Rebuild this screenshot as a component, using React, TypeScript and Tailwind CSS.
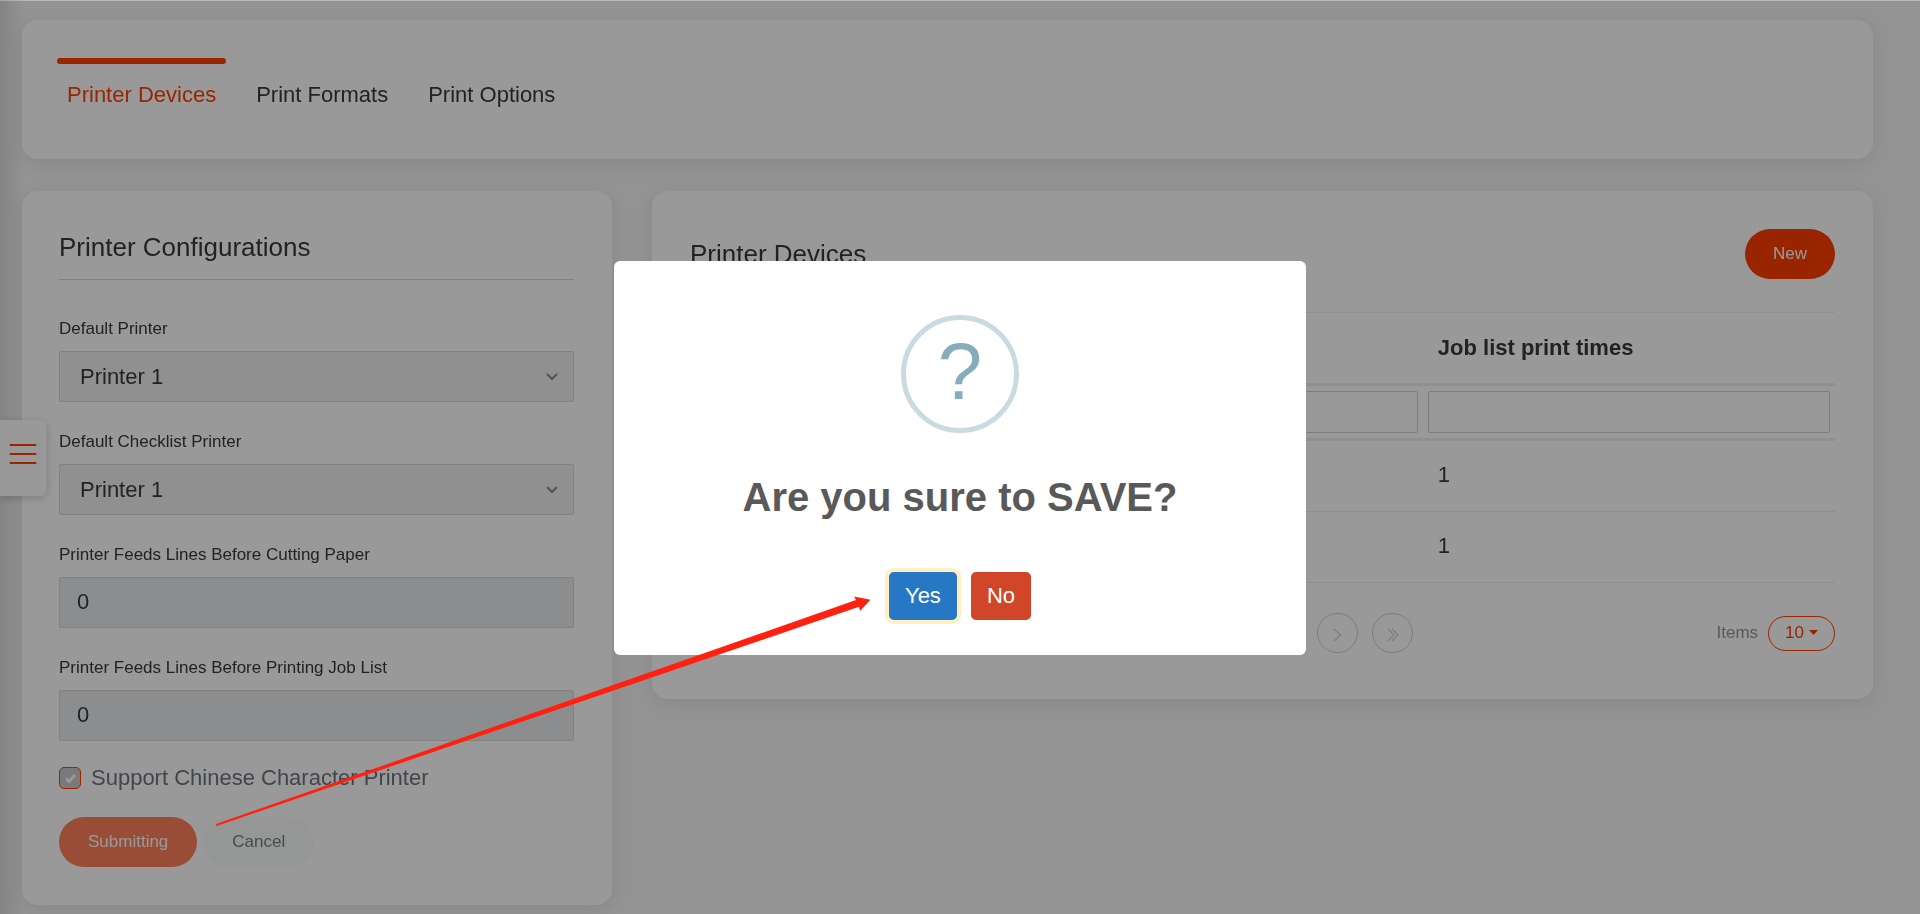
import type { ReactNode } from "react";

const tabs = ["Printer Devices", "Print Formats", "Print Options"];

const jobListTimes = [1, 1];

const Card = ({ className = "", children }: { className?: string; children: ReactNode }) => (
  <section className={`rounded-2xl bg-white shadow-[0_4px_20px_rgba(0,0,0,0.08)] ${className}`}>
    {children}
  </section>
);

const TabBar = () => (
  <Card className="h-[139px] px-[35px] pt-[38px]">
    <nav className="flex">
      {tabs.map((tab, i) => (
        <a
          key={tab}
          href="#"
          className={`relative mr-5 px-[10px] pt-[21px] text-[22px] leading-8 ${
            i === 0 ? "text-[#ff3f00]" : "text-[#393939]"
          }`}
        >
          {i === 0 && <span className="absolute inset-x-0 top-0 h-[6px] rounded-full bg-[#ff3f00]" />}
          {tab}
        </a>
      ))}
    </nav>
  </Card>
);

const PrinterSelect = ({ id, label }: { id: string; label: string }) => (
  <div>
    <label htmlFor={id} className="mb-2 block text-[17px] leading-7">
      {label}
    </label>
    <div className="relative">
      <select
        id={id}
        className="block h-[51px] w-full appearance-none rounded-xs border border-[#d7d7d7] bg-[#f0f0f0] px-5 text-[22px]"
      >
        <option>Printer 1</option>
      </select>
      <svg
        className="pointer-events-none absolute top-5 right-4 h-3 w-3"
        viewBox="0 0 12 12"
        fill="none"
        stroke="#8a8a8a"
        strokeWidth="2"
      >
        <path d="M1 3l5 5 5-5" />
      </svg>
    </div>
  </div>
);

const LinesInput = ({ id, label }: { id: string; label: string }) => (
  <div>
    <label htmlFor={id} className="mb-2 block text-[17px] leading-7">
      {label}
    </label>
    <input
      id={id}
      defaultValue="0"
      className="block h-[51px] w-full rounded-xs border border-[#d7d7d7] bg-[#e9ecef] px-[17px] pb-0.5 text-[22px]"
    />
  </div>
);

const Configurations = () => (
  <Card className="w-[590px] shrink-0 pt-10 pr-[38px] pb-[38px] pl-[37px]">
    <h2 className="mb-[35px] border-b border-[#d7d7d7] pb-[15px] text-[26px] leading-[33px]">
      Printer Configurations
    </h2>
    <div className="mb-[21px] flex flex-col gap-[26px]">
      <PrinterSelect id="printer" label="Default Printer" />
      <PrinterSelect id="checklist" label="Default Checklist Printer" />
      <LinesInput id="cut" label="Printer Feeds Lines Before Cutting Paper" />
      <LinesInput id="job" label="Printer Feeds Lines Before Printing Job List" />
    </div>
    <label className="flex items-center text-[22px] leading-8 text-[#6c757d]">
      <span className="relative mr-[10px] h-[22px] w-[22px]">
        <input
          type="checkbox"
          defaultChecked
          className="block h-[22px] w-[22px] appearance-none rounded-[5px] border border-[#ff3f00] bg-[#cccccc]"
        />
        <svg
          className="pointer-events-none absolute inset-0"
          viewBox="0 0 22 22"
          fill="none"
          stroke="#fff"
          strokeWidth="3"
        >
          <path d="M7 11.500l3 3 6-6.500" />
        </svg>
      </span>
      Support Chinese Character Printer
    </label>
    <div className="mt-[23px] flex gap-[6px] text-[17px]">
      <button className="h-[50px] rounded-full bg-[#ff7f5a] px-[29px] text-white">Submitting</button>
      <button className="h-[50px] rounded-full bg-[#f8fbfa] px-[29px] text-[#7c7c7c]">Cancel</button>
    </div>
  </Card>
);

const PagerButton = ({ label, path }: { label: string; path: string }) => (
  <button
    aria-label={label}
    className="grid h-10 w-[41px] place-items-center rounded-full border border-[#d0d0d0] pt-1"
  >
    <svg className="h-4 w-4" viewBox="0 0 16 16" fill="none" stroke="#d0d0d0" strokeWidth="1.25">
      <path d={path} />
    </svg>
  </button>
);

const Devices = () => (
  <Card className="min-w-0 flex-1 px-[38px] pt-[38px] pb-[46px]">
    <div className="mb-[33px] flex items-center justify-between">
      <h2 className="text-[26px]">Printer Devices</h2>
      <button className="h-[50px] rounded-full bg-[#ff3f00] px-7 text-[17px] text-white">New</button>
    </div>
    <table className="w-full table-fixed border-separate border-spacing-0 text-[22px]">
      <thead>
        <tr>
          <th className="w-[64%] border-t border-b-3 border-t-[#efefef] border-b-[#efefef]" />
          <th className="h-[74px] border-t border-b-3 border-t-[#efefef] border-b-[#efefef] px-[15px] pb-0.5 text-left font-bold">
            Job list print times
          </th>
        </tr>
        <tr>
          {["Filter devices", "Filter job list print times"].map((label) => (
            <th key={label} className="h-[55px] border-b-3 border-[#efefef] px-[5px] py-0">
              <input
                aria-label={label}
                className="block h-[42px] w-full rounded-xs border border-[#d0d0d0] px-2"
              />
            </th>
          ))}
        </tr>
      </thead>
      <tbody>
        {jobListTimes.map((times, i) => (
          <tr key={i}>
            <td className="border-b border-[#ebebeb]" />
            <td className="h-[71px] border-b border-[#ebebeb] px-[15px] pb-1">{times}</td>
          </tr>
        ))}
      </tbody>
    </table>
    <div className="mt-[30px] grid grid-cols-[1fr_auto_1fr] items-center">
      <span />
      <div className="flex gap-[14px]">
        <PagerButton label="First" path="M8 2L2 8l6 6M12 2L6 8l6 6" />
        <PagerButton label="Previous" path="M11 2L5 8l6 6" />
        <span className="w-20" />
        <PagerButton label="Next" path="M5 2l6.500 6-6.500 6" />
        <PagerButton label="Last" path="M4 2l6 6-6 6M8 2l6 6-6 6" />
      </div>
      <div className="flex items-center justify-end gap-[10px] text-[17px]">
        <span className="text-[#969696]">Items</span>
        <button className="flex h-[35px] items-center gap-[5px] rounded-full border border-[#ff3f00] px-4 text-[#ff3f00]">
          10
          <svg className="mb-0.5 h-[5px] w-[9px]" viewBox="0 0 9 5" fill="currentColor">
            <path d="M0 0h9L4.500 5z" />
          </svg>
        </button>
      </div>
    </div>
  </Card>
);

const MenuHandle = () => (
  <button
    aria-label="Menu"
    className="fixed top-[420px] left-0 grid h-[76px] w-[46px] place-items-center rounded-r-md bg-white pb-1 shadow-[0_2px_10px_rgba(0,0,0,0.2)]"
  >
    <svg className="h-6 w-7" viewBox="0 0 28 24" stroke="#ff3f00" strokeWidth="2" strokeLinecap="round">
      <path d="M1.500 1h25M1.500 10h25M1.500 19h25" />
    </svg>
  </button>
);

const ConfirmDialog = () => (
  <div className="fixed inset-x-0 top-px bottom-0 flex items-center justify-center bg-black/40 pt-px">
    <div
      role="dialog"
      aria-labelledby="confirm-title"
      className="flex w-[692px] flex-col items-center rounded-md bg-white pt-[54px] pb-[35px]"
    >
      <div className="grid h-[118px] w-[118px] place-items-center rounded-full border-5 border-[#c9dae1] pb-1 text-[80px] leading-none text-[#87adbd]">
        ?
      </div>
      <h1 id="confirm-title" className="mt-10 text-[40px] leading-[48px] font-bold text-[#595959]">
        Are you sure to SAVE?
      </h1>
      <div className="mt-[51px] flex gap-[14px] text-[22px] text-white">
        <button className="h-12 rounded-[5px] bg-[#2778c4] px-4 pb-0.5 ring-4 ring-[#ffefc2]">Yes</button>
        <button className="h-12 rounded-[5px] bg-[#d14529] px-4 pb-0.5">No</button>
      </div>
    </div>
  </div>
);

const Pointer = () => (
  <svg className="pointer-events-none fixed top-[590px] left-[210px] h-[240px] w-[670px]" viewBox="210 590 670 240">
    <path fill="#ff2010" d="M216 824L856 600l-2-3.500 16.500 3.200L860 611l-1-4.200L216.500 826z" />
  </svg>
);

export default function App() {
  return (
    <main className="min-h-screen border-t border-[#b8b9b8] bg-[#f5f5f5] font-['Liberation_Sans',sans-serif] text-[#393939]">
      <div className="fixed inset-y-0 left-0 w-6 bg-linear-to-r from-black/10 to-transparent" />
      <div className="relative pt-[19px] pr-[47px] pl-[22px]">
        <TabBar />
        <div className="mt-8 flex items-start gap-10">
          <Configurations />
          <Devices />
        </div>
      </div>
      <MenuHandle />
      <ConfirmDialog />
      <Pointer />
    </main>
  );
}
